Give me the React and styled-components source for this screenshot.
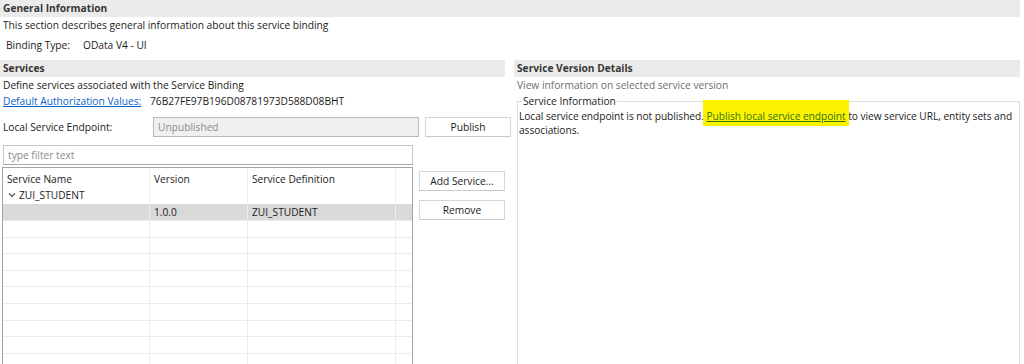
import React from 'react';
import styled, { createGlobalStyle } from 'styled-components';

const GlobalStyle = createGlobalStyle`
    html, body {
        margin: 0;
        padding: 0;
        background: #ffffff;
        overflow: hidden;
    }
    body {
        font-family: "Open Sans", "Noto Sans", sans-serif;
        font-size: 10.2px;
        color: #1b1b1b;
    }
`;

const Page = styled.div`
    width: 1020px;
    height: 364px;
    overflow: hidden;
`;

const SectionHeader = styled.div`
    height: 17px;
    line-height: 17px;
    padding-left: 3px;
    background: #ebebeb;
    color: #373737;
    font-weight: 700;
`;

const Description = styled.div`
    line-height: 14px;
    padding-left: ${p => p.indent || 3}px;
    margin-top: ${p => p.top || 1}px;
    color: ${p => (p.muted ? '#6e6e6e' : '#1b1b1b')};
    white-space: nowrap;
`;

const InfoRow = styled.div`
    display: grid;
    grid-template-columns: ${p => p.labelWidth}px auto;
    align-items: center;
    line-height: 14px;
    padding-left: ${p => p.indent}px;
    margin-top: ${p => p.top}px;
    white-space: nowrap;
`;

const Link = styled.a`
    color: #0d63c7;
    text-decoration: underline;
    cursor: pointer;
`;

const Columns = styled.div`
    display: grid;
    grid-template-columns: 505px 506px;
    column-gap: 9px;
    margin-top: 8px;
`;

const Column = styled.div`
    display: flex;
    flex-direction: column;
`;

const EndpointRow = styled.div`
    display: grid;
    grid-template-columns: 144px 266px 86px;
    column-gap: 6px;
    align-items: center;
    padding-left: 3px;
    margin-top: 9px;
    white-space: nowrap;
`;

const ReadOnlyField = styled.input`
    box-sizing: border-box;
    height: 20px;
    width: 100%;
    margin: 0;
    padding: 0 4px;
    border: 1px solid #b9b9b9;
    background: #f0f0f0;
    color: #8c8c8c;
    font: inherit;
    outline: none;
`;

const Button = styled.button`
    box-sizing: border-box;
    height: 20px;
    width: 86px;
    margin: 0;
    padding: 0;
    border: 1px solid #d6d6d6;
    border-bottom-color: #c8c8c8;
    background: #ffffff;
    color: #1b1b1b;
    font: inherit;
    cursor: pointer;
`;

const Workspace = styled.div`
    display: grid;
    grid-template-columns: 410px 86px;
    column-gap: 6px;
    padding-left: 3px;
    margin-top: 8px;
`;

const TreeArea = styled.div`
    display: flex;
    flex-direction: column;
    gap: 2px;
`;

const FilterField = styled.input`
    box-sizing: border-box;
    height: 20px;
    width: 410px;
    margin: 0;
    padding: 0 4px;
    border: 1px solid #c6c6c6;
    border-bottom-color: #a9a9a9;
    background: #ffffff;
    font: inherit;
    color: #1b1b1b;
    outline: none;
    &::placeholder {
        color: #8a8a8a;
    }
`;

const Tree = styled.div`
    width: 409px;
    height: 230px;
    margin-left: -1px;
    border: 1px solid #a3a3a3;
    border-bottom: none;
    overflow: hidden;
`;

const TreeRow = styled.div`
    box-sizing: border-box;
    display: grid;
    grid-template-columns: 147px 98px 148px 16px;
    height: ${p => p.h}px;
    background: ${p => (p.selected ? '#d9d9d9' : 'transparent')};
    border-bottom: 1px solid ${p => (p.lined ? '#ebebeb' : 'transparent')};
`;

const TreeCell = styled.div`
    display: flex;
    align-items: ${p => (p.top ? 'flex-start' : 'center')};
    gap: 3px;
    padding-left: ${p => p.pad || 4}px;
    padding-top: ${p => (p.top ? 4 : 0)}px;
    line-height: 14px;
    border-right: 1px solid ${p => (p.last ? 'transparent' : '#ededed')};
    white-space: nowrap;
    overflow: hidden;
`;

const ButtonStack = styled.div`
    display: flex;
    flex-direction: column;
    gap: 9px;
    padding-top: 26px;
`;

const GroupBox = styled.fieldset`
    margin: 2px 0 0 3px;
    padding: 1px 0 0 1px;
    height: 300px;
    border: 1px solid #dedede;
    border-bottom: none;
    min-width: 0;
`;

const GroupTitle = styled.legend`
    margin-left: 3px;
    padding: 0 1px;
    line-height: 14px;
`;

const Paragraph = styled.p`
    margin: 0;
    line-height: 14px;
    letter-spacing: -0.05px;
`;

const Highlight = styled.span`
    position: relative;
    z-index: 0;
    &::before {
        content: '';
        position: absolute;
        left: -3px;
        right: -3px;
        top: -9px;
        bottom: -3px;
        background: #fff200;
        z-index: -1;
    }
`;

const MarkedLink = styled.a`
    color: #2e7716;
    text-decoration: underline;
    cursor: pointer;
`;

const Chevron = () => (
    <svg width="8" height="6" viewBox="0 0 8 6">
        <polyline points="1,1.5 4,4.5 7,1.5" fill="none" stroke="#4a4a4a" strokeWidth="1.1" />
    </svg>
);

const emptyRows = Array.from({ length: 9 });

const App = () => {
    return (
        <Page>
            <GlobalStyle />
            <SectionHeader>General Information</SectionHeader>
            <Description>This section describes general information about this service binding</Description>
            <InfoRow labelWidth={77} indent={6} top={6}>
                <span>Binding Type:</span>
                <span>OData V4 - UI</span>
            </InfoRow>

            <Columns>
                <Column>
                    <SectionHeader>Services</SectionHeader>
                    <Description>Define services associated with the Service Binding</Description>
                    <InfoRow labelWidth={147} indent={3} top={2}>
                        <span><Link>Default Authorization Values:</Link></span>
                        <span>76B27FE97B196D08781973D588D08BHT</span>
                    </InfoRow>
                    <EndpointRow>
                        <span>Local Service Endpoint:</span>
                        <ReadOnlyField value="Unpublished" readOnly />
                        <Button>Publish</Button>
                    </EndpointRow>
                    <Workspace>
                        <TreeArea>
                            <FilterField placeholder="type filter text" />
                            <Tree>
                                <TreeRow h={19}>
                                    <TreeCell top>Service Name</TreeCell>
                                    <TreeCell top>Version</TreeCell>
                                    <TreeCell top>Service Definition</TreeCell>
                                    <TreeCell last />
                                </TreeRow>
                                <TreeRow h={17}>
                                    <TreeCell pad={5}><Chevron />ZUI_STUDENT</TreeCell>
                                    <TreeCell />
                                    <TreeCell />
                                    <TreeCell last />
                                </TreeRow>
                                <TreeRow h={17} selected lined>
                                    <TreeCell />
                                    <TreeCell>1.0.0</TreeCell>
                                    <TreeCell>ZUI_STUDENT</TreeCell>
                                    <TreeCell last />
                                </TreeRow>
                                {emptyRows.map((_, i) => (
                                    <TreeRow key={i} h={16.6} lined>
                                        <TreeCell />
                                        <TreeCell />
                                        <TreeCell />
                                        <TreeCell last />
                                    </TreeRow>
                                ))}
                            </Tree>
                        </TreeArea>
                        <ButtonStack>
                            <Button>Add Service...</Button>
                            <Button>Remove</Button>
                        </ButtonStack>
                    </Workspace>
                </Column>

                <Column>
                    <SectionHeader>Service Version Details</SectionHeader>
                    <Description muted>View information on selected service version</Description>
                    <GroupBox>
                        <GroupTitle>Service Information</GroupTitle>
                        <Paragraph>
                            Local service endpoint is not published.{' '}
                            <Highlight><MarkedLink>Publish local service endpoint</MarkedLink></Highlight>{' '}
                            to view service URL, entity sets and associations.
                        </Paragraph>
                    </GroupBox>
                </Column>
            </Columns>
        </Page>
    );
};

export default App;
